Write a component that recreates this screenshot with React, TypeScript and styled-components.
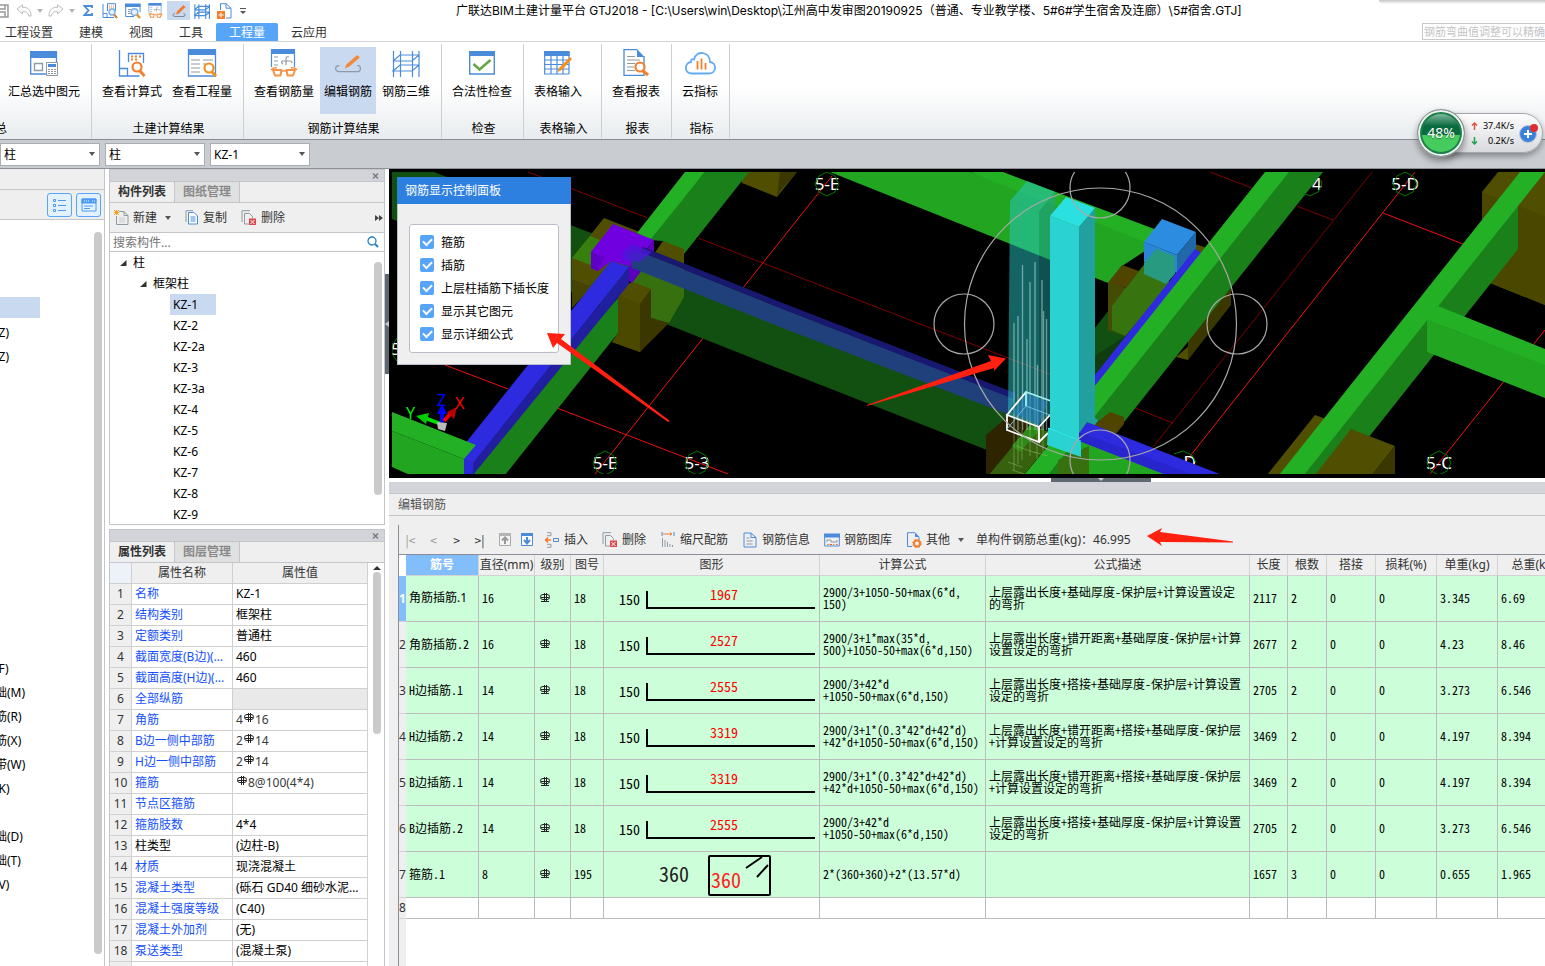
import React from 'react';
import styled, { createGlobalStyle, css } from 'styled-components';

const uiFont = `"Noto Sans", "Noto Sans CJK SC", sans-serif`;
const titleFont = `Inter, "Noto Sans CJK SC", sans-serif`;
const gridFont = `"Noto Sans CJK SC", "Liberation Mono", monospace`;

const GlobalStyle = createGlobalStyle`
  * { box-sizing: border-box; }
  body { margin: 0; background: #fff; font: 12px/16px ${uiFont}; color: #000; overflow: hidden; }
  button, input, select { font: inherit; color: inherit; }
  button { border: 0; background: none; padding: 0; white-space: nowrap; cursor: pointer; }
  ul { list-style: none; margin: 0; padding: 0; }
  svg { display: block; flex: none; }
`;

/* ---------- shell ---------- */

const Shell = styled.div`
  position: relative;
  display: flex;
  flex-direction: column;
  height: 100vh;
  overflow: hidden;
`;

const TitleBar = styled.header`
  display: grid;
  grid-template-columns: 456px 1fr;
  height: 22px;
  flex: none;
`;

const QuickBar = styled.div`
  display: flex;
  align-items: center;
  height: 20px;
  margin-left: -9px;
`;

const QuickButton = styled.button<{ $active?: boolean; $width?: number }>`
  display: flex;
  align-items: center;
  justify-content: center;
  width: ${p => p.$width ?? 23}px;
  height: 19px;
  margin-top: 1px;
  background: ${p => (p.$active ? '#c9d9f0' : 'none')};
`;

const WindowTitle = styled.h1`
  margin: 0;
  font: 12px/22px ${titleFont};
  white-space: nowrap;
`;

const TopShade = styled.div`
  position: absolute;
  top: 0;
  right: 0;
  width: 166px;
  height: 4px;
  background: linear-gradient(#c4c4c4, #fff);
  border-bottom-left-radius: 4px;
`;

const TabBar = styled.nav`
  display: flex;
  justify-content: space-between;
  height: 20px;
  flex: none;
  border-bottom: 1px solid #d4d4d4;
`;

const Tabs = styled.div`
  display: flex;
  margin-left: -8px;
  padding-top: 1px;
`;

const RibbonTab = styled.button<{ $active?: boolean }>`
  padding: 1px 13px 0;
  height: 18px;
  line-height: 17px;
  border-radius: 2px 2px 0 0;
  color: ${p => (p.$active ? '#fff' : '#333')};
  background: ${p => (p.$active ? '#57a5f8' : 'none')};
`;

const HelpSearch = styled.input`
  width: 123px;
  height: 17px;
  margin-top: 1px;
  padding: 0 0 0 1px;
  border: 1px solid #c9c9c9;
  border-right: 0;
  font-size: 11px;
  background: #fff;
  &::placeholder { color: #c4c4c4; opacity: 1; }
`;

const Ribbon = styled.div`
  display: flex;
  height: 98px;
  flex: none;
  padding: 2px 0 1px;
  border-bottom: 1px solid #878c94;
  background: linear-gradient(#fff 45%, #e8ecee);
`;

const RibbonGroup = styled.section<{ $width?: number; $pull?: number }>`
  display: flex;
  flex-direction: column;
  justify-content: space-between;
  flex: none;
  min-width: ${p => p.$width ?? 0}px;
  margin-left: ${p => -(p.$pull ?? 0)}px;
  border-right: 1px solid #ccced1;
  padding: 3px 7px 0 6px;
`;

const RibbonButtons = styled.div<{ $end?: boolean }>`
  display: flex;
  gap: 2px;
  justify-content: ${p => (p.$end ? 'flex-end' : 'flex-start')};
`;

const RibbonButton = styled.button<{ $active?: boolean }>`
  display: flex;
  flex-direction: column;
  align-items: center;
  gap: 6px;
  height: 67px;
  padding: 2px 4px 0;
  line-height: 18px;
  background: ${p => (p.$active ? '#c9d9f0' : 'none')};
`;

const GroupLabel = styled.div`
  padding-left: 3px;
  text-align: center;
  line-height: 18px;
`;

const ComboBar = styled.div`
  display: flex;
  align-items: center;
  gap: 5px;
  height: 29px;
  flex: none;
  border-bottom: 1px solid #8d9198;
  background: #c9ccd1;
`;

const ComboBox = styled.label`
  display: grid;
  grid-template-columns: 1fr 10px;
  align-items: center;
  width: 100px;
  height: 23px;
  border: 1px solid #aaadb1;
  background: #fff;
  select {
    grid-area: 1 / 1 / 2 / 3;
    width: 100%;
    height: 21px;
    padding: 1px 3px 0;
    border: 0;
    background: none;
    appearance: none;
  }
  svg { grid-area: 1 / 2; pointer-events: none; }
`;

/* ---------- speed widget ---------- */

const SpeedWidget = styled.aside`
  position: absolute;
  top: 109px;
  right: 2px;
  display: flex;
  align-items: center;
  width: 126px;
  height: 48px;
`;

const SpeedPill = styled.div`
  display: flex;
  align-items: center;
  justify-content: flex-end;
  gap: 5px;
  width: 98px;
  height: 40px;
  margin-left: auto;
  padding-right: 3px;
  border: 1px solid #a5a8ad;
  border-radius: 0 20px 20px 0;
  background: linear-gradient(#fdfdfd, #d9dade);
  box-shadow: 0 3px 6px rgba(0, 0, 0, 0.35);
`;

const SpeedBall = styled.div`
  position: absolute;
  left: 0;
  display: grid;
  place-items: center;
  width: 48px;
  height: 48px;
  border-radius: 50%;
  border: 1px solid #8d9096;
  box-shadow: inset 0 0 0 2px #f2f2f2, inset 0 0 0 4px #1d8048, 0 4px 7px rgba(0, 0, 0, 0.4);
  background: linear-gradient(#7fb89a 4px, #0a6b40 16px, #0a6b40 25px, #46cc5e 25px);
  color: #fff;
  font-size: 14px;
  text-shadow: 0 1px 1px rgba(0, 60, 20, 0.5);
`;

const SpeedLines = styled.div`
  display: grid;
  grid-template-columns: 8px 35px;
  row-gap: 3px;
  align-items: center;
  font-size: 9px;
  line-height: 12px;
  span { text-align: right; }
`;

/* ---------- work area ---------- */

const Work = styled.main`
  display: flex;
  flex: 1;
  min-height: 0;
`;

const NavPanel = styled.aside`
  position: relative;
  width: 105px;
  flex: none;
  border-right: 1px solid #c3c5ca;
  overflow: hidden;
`;

const NavHead = styled.div`
  height: 21px;
  background: #efefef;
  border-bottom: 1px solid #c3c5ca;
`;

const NavTools = styled.div`
  display: flex;
  align-items: center;
  justify-content: flex-end;
  gap: 4px;
  height: 30px;
  padding-right: 3px;
  background: #efefef;
  border-bottom: 1px solid #c3c5ca;
`;

const NavToggle = styled.button`
  display: grid;
  place-items: center;
  width: 25px;
  height: 24px;
  border: 1px solid #57a5f8;
  border-radius: 3px;
  background: #e4f1ff;
`;

const NavList = styled.ul`
  margin: 2px 0 0 -5px;
  li { height: 24px; line-height: 24px; white-space: nowrap; }
`;

const NavSelected = styled.span`
  display: block;
  width: 45px;
  height: 21px;
  margin-top: 3px;
  background: #c9d9f0;
`;

const Thumb = styled.div<{ $top: number; $right: number; $height?: number; $bottom?: number }>`
  position: absolute;
  top: ${p => p.$top}px;
  right: ${p => p.$right}px;
  width: 8px;
  ${p => (p.$height ? css`height: ${p.$height}px;` : css`bottom: ${p.$bottom ?? 0}px;`)}
  border-radius: 4px;
  background: #cacaca;
`;

const SideColumn = styled.div`
  display: flex;
  flex-direction: column;
  gap: 4px;
  width: 276px;
  margin-left: 4px;
  flex: none;
`;

const Dock = styled.section<{ $height?: number }>`
  display: flex;
  flex-direction: column;
  min-height: 0;
  flex: ${p => (p.$height ? `0 0 ${p.$height}px` : '1')};
  border: 1px solid #c3c5ca;
  border-bottom-width: ${p => (p.$height ? 1 : 0)}px;
  overflow: hidden;
`;

const DockStrip = styled.div`
  display: flex;
  align-items: center;
  justify-content: flex-end;
  height: 12px;
  flex: none;
  padding-right: 4px;
  background: #d3d4d9;
  border-bottom: 1px solid #c3c5ca;
`;

const DockTabs = styled.div`
  display: flex;
  height: 21px;
  flex: none;
  background: #efefef;
  border-bottom: 1px solid #c3c5ca;
`;

const DockTab = styled.button<{ $active?: boolean }>`
  width: 65px;
  border-right: 1px solid #c3c5ca;
  font-weight: 700;
  line-height: 20px;
  color: ${p => (p.$active ? '#333' : '#8a8a8a')};
  background: ${p => (p.$active ? '#efefef' : '#e0e0e0')};
`;

const DockTools = styled.div`
  display: flex;
  align-items: center;
  gap: 14px;
  height: 30px;
  flex: none;
  padding: 0 1px 0 4px;
  background: #efefef;
  border-bottom: 1px solid #c3c5ca;
`;

const ToolButton = styled.button`
  display: flex;
  align-items: center;
  gap: 4px;
  color: #333;
  line-height: 18px;
`;

const PushRight = styled.button`
  margin-left: auto;
`;

const SearchRow = styled.label`
  display: flex;
  align-items: center;
  height: 19px;
  flex: none;
  padding-right: 5px;
  border-bottom: 1px solid #c3c5ca;
  input {
    flex: 1;
    min-width: 0;
    height: 18px;
    padding: 0 3px;
    border: 0;
    background: none;
  }
  input::placeholder { color: #757575; opacity: 1; }
`;

const Tree = styled.ul`
  position: relative;
  flex: 1;
  min-height: 0;
  overflow: hidden;
`;

const TreeRow = styled.li<{ $level: number }>`
  display: flex;
  align-items: center;
  gap: 6px;
  height: 21px;
  padding-left: ${p => [10, 30, 60][p.$level]}px;
`;

const TreeName = styled.span<{ $active?: boolean; $leaf?: boolean }>`
  line-height: 21px;
  padding: ${p => (p.$leaf ? '0 18px 0 3px' : '0')};
  background: ${p => (p.$active ? '#c9d9f0' : 'none')};
`;

const PropScroll = styled.div`
  position: relative;
  flex: 1;
  min-height: 0;
  overflow: hidden;
`;

const PropTable = styled.table`
  width: 258px;
  table-layout: fixed;
  border-collapse: separate;
  border-spacing: 0;
  td, th {
    height: 21px;
    padding: 0 3px;
    border-right: 1px solid #d0d0d0;
    border-bottom: 1px solid #d0d0d0;
    font-weight: 400;
    line-height: 20px;
    white-space: nowrap;
    overflow: hidden;
    text-overflow: ellipsis;
    text-align: left;
  }
  thead th { background: #efefef; text-align: center; color: #333; }
  thead th:first-child { background: #edf2f9; }
  tbody th { background: #efefef; text-align: center; color: #333; padding: 0; }
`;

const PropName = styled.td<{ $plain?: boolean }>`
  color: ${p => (p.$plain ? '#000' : '#1450ff')};
`;

const PropValue = styled.td<{ $blank?: boolean; $soft?: boolean }>`
  background: ${p => (p.$blank ? '#e9e9e9' : '#fff')};
  color: ${p => (p.$soft ? '#3a3a3a' : '#000')};
  svg { display: inline-block; margin: 0 1px; vertical-align: 1px; }
`;

const ScrollUp = styled.svg`
  position: absolute;
  top: 3px;
  right: 3px;
`;

const Splitter = styled.div`
  display: flex;
  flex-direction: column;
  width: 4px;
  flex: none;
  padding-top: 105px;
`;

const SplitterGrip = styled.button<{ $flat?: boolean }>`
  display: grid;
  place-items: center;
  width: ${p => (p.$flat ? 100 : 4)}px;
  height: ${p => (p.$flat ? 4 : 100)}px;
  background: #606972;
`;

const Center = styled.div`
  display: flex;
  flex-direction: column;
  flex: 1;
  min-width: 0;
`;

const Viewport = styled.section`
  position: relative;
  height: 309px;
  flex: none;
  background: #000;
`;

const SceneSvg = styled.svg`
  width: 100%;
  height: 309px;
`;

const ArrowLayer = styled.svg`
  position: absolute;
  inset: 0;
  width: 100%;
  height: 309px;
  pointer-events: none;
`;

const FlatSplitter = styled.div`
  display: flex;
  height: 4px;
  flex: none;
  padding-left: 662px;
`;

/* ---------- rebar display dialog ---------- */

const Dialog = styled.section`
  position: absolute;
  top: 8px;
  left: 8px;
  width: 174px;
  background: #efefef;
  border: 1px solid #b9bdcc;
  border-top: 0;
`;

const DialogTitle = styled.h2`
  margin: 0 -1px;
  padding: 0 8px;
  background: #2e80e0;
  color: #fff;
  font: 12px/27px ${uiFont};
`;

const CheckBoxes = styled.fieldset`
  margin: 20px 11px 11px;
  padding: 6px 0 6px 10px;
  border: 1px solid #babcca;
  border-radius: 3px;
  background: #fff;
  label {
    display: flex;
    align-items: center;
    gap: 7px;
    height: 23px;
    white-space: nowrap;
  }
`;

const Check = styled.input`
  appearance: none;
  display: grid;
  place-items: center;
  width: 14px;
  height: 14px;
  margin: 0 0 1px;
  border-radius: 2px;
  background: #57a5f8;
  &::after {
    content: '';
    width: 7px;
    height: 4px;
    margin-top: -2px;
    border: solid #fff;
    border-width: 0 0 2px 2px;
    transform: rotate(-45deg);
  }
`;

/* ---------- rebar editor ---------- */

const Editor = styled.section`
  display: flex;
  flex-direction: column;
  flex: 1;
  min-height: 0;
  background: #efefef;
`;

const EditorStrip = styled.div`
  height: 12px;
  flex: none;
  background: #d3d4d9;
  border-bottom: 1px solid #c3c5ca;
`;

const EditorTitle = styled.h2`
  margin: 0;
  height: 22px;
  flex: none;
  padding-left: 9px;
  border-bottom: 1px solid #c3c5ca;
  color: #555;
  font: 12px/21px ${uiFont};
`;

const EditorBody = styled.div`
  display: flex;
  flex-direction: column;
  flex: 1;
  min-height: 0;
  margin: 9px 0 0 9px;
  border-left: 1px solid #8b8d98;
`;

const EditorTools = styled.div`
  display: flex;
  align-items: center;
  height: 30px;
  flex: none;
  border-bottom: 1px solid #8b8d98;
  color: #333;
  white-space: nowrap;
`;

const NavCluster = styled.div`
  display: flex;
  margin-right: 6px;
  button { width: 23px; font-family: ${gridFont}; }
  button:disabled { color: #999; }
`;

const IconPair = styled.div`
  display: flex;
  gap: 6px;
  margin-right: 9px;
`;

const ToolGroup = styled.div`
  display: flex;
  gap: 14px;
`;

const Total = styled.output`
  margin: 0 14px 0 12px;
`;

const GridArea = styled.div`
  flex: 1;
  min-height: 0;
  overflow: hidden;
  background: linear-gradient(90deg, #efefef 7px, #fff 7px);
`;

const RebarTable = styled.table`
  width: 1172px;
  table-layout: fixed;
  border-collapse: separate;
  border-spacing: 0;
  th, td {
    padding: 0 3px;
    border-right: 1px solid #bcbcbc;
    border-bottom: 1px solid #bcbcbc;
    text-align: left;
    font-weight: 400;
  }
  thead th {
    height: 21px;
    padding: 0;
    text-align: center;
    line-height: 20px;
    color: #333;
    border-color: #d3d3d3;
    background: #efefef;
    white-space: nowrap;
  }
  thead th:first-child { background: #fff; border: 0; }
  tbody th { padding: 0; background: #efefef; color: #333; border-color: #d3d3d3; border-right: 0; }
  td {
    padding: 0 2px 2px 3px;
    font: 12px/12px ${gridFont};
    font-feature-settings: 'hwid';
    white-space: nowrap;
  }
`;

const ColumnHead = styled.th<{ $active?: boolean }>`
  && {
    ${p => p.$active && css`background: #82bdfc; color: #fff; font-weight: 700;`}
  }
`;

const RebarRow = styled.tr<{ $empty?: boolean; $active?: boolean }>`
  height: ${p => (p.$empty ? 21 : 46)}px;
  td { background: ${p => (p.$empty ? '#fff' : '#ccffd9')}; }
  td:nth-child(2) { ${p => p.$active && css`font-family: ${uiFont}; font-feature-settings: normal;`} }
  && th { ${p => p.$active && css`background: #82bdfc; color: #fff; font-weight: 700;`} }
`;

const GradeCell = styled.td`
  && { padding-left: 5px; }
`;

const ShapeCell = styled.td`
  && { padding: 0; }
  text { font-family: ${gridFont}; }
`;

/* ---------- icons ---------- */

const B = '#4a8bdb';
const O = '#f27f2c';
const G = '#8f9aa3';

const Caret = ({ color = '#555' }: { color?: string }) => (
  <svg width="6" height="4"><path d="M0 0h6L3 4z" fill={color} /></svg>
);

const Close = () => (
  <svg width="8" height="8" stroke="#777" strokeWidth="1.400"><path d="M1 1.500l5 5M6 1.500l-5 5" /></svg>
);

const Rebar = ({ foot }: { foot?: boolean }) => (
  <svg width="10" height="10" viewBox="0 0 10 10" fill="none" stroke="#222" strokeWidth="1" role="img" aria-label="HRB400">
    <path d="M.5 3.500Q.5 1.500 3 1.500h4q2.500 0 2.500 2v1q0 2-2.500 2H3Q.5 6.500 .5 4.500zM4.500 0v9M6.500 0v9M1 4.500h8" />
    {foot && <path d="M1 8.500h8" />}
  </svg>
);

const Undo = ({ flip }: { flip?: boolean }) => (
  <svg width="16" height="13" viewBox="0 0 16 13" fill="none" stroke="#b9bcc0" strokeLinejoin="round">
    <path d={flip ? 'M15 5L9.500 .8v2.500C4 3 1 6 1 12h2.500c.5-3.500 2.500-4.500 6-4.500V10z' : 'M1 5L6.500 .8v2.500C12 3 15 6 15 12h-2.500c-.5-3.500-2.500-4.500-6-4.500V10z'} />
  </svg>
);

const FormulaIcon = ({ s = 28 }: { s?: number }) => (
  <svg width={s} height={s} viewBox="0 0 28 28" fill="none">
    <path d="M1.500 1v26h20M1.500 19.500h8V27M10.500 13V4.500h15V14" stroke={B} strokeWidth="1.300" />
    <path d="M13 7.500h2M17 7.500h2M21 7.500h2M13 10.500h2M17 10.500h2" stroke={O} strokeWidth="2" />
    <circle cx="19" cy="18" r="4.500" stroke={O} strokeWidth="2.200" fill="#fff" /><path d="M22 22l4.500 5" stroke={O} strokeWidth="3" />
  </svg>
);

const QuickFormulaIcon = () => (
  <svg width="16" height="16" viewBox="0 0 16 16" fill="none">
    <path d="M1 1v13.500h11M1 10.500h4v4M5.500 8V.7h8V8" stroke={B} />
    <path d="M7 3h5M7 5h5" stroke={O} strokeDasharray="1 1" />
    <circle cx="10" cy="9" r="3" stroke="#7ab0e8" strokeWidth="1.400" fill="#e4f1ff" /><path d="M12 11.500l3 3.500" stroke="#c9824a" strokeWidth="2" />
  </svg>
);

const QuantityIcon = () => (
  <svg width="30" height="28" viewBox="0 0 30 28" fill="none">
    <path d="M1.500 0v27h27V0" stroke={B} strokeWidth="1.300" /><path d="M1 0h28v6H1z" fill={B} />
    <path d="M4 11h9M4 15h9M4 19h9M4 23h9M16 11h10M16 15h3" stroke={G} strokeWidth="1.200" />
    <circle cx="22" cy="19" r="4.500" stroke="#f2921d" strokeWidth="2.200" fill="#fff" /><path d="M25 23l4 4" stroke="#f2921d" strokeWidth="3" />
  </svg>
);

const QuickQuantityIcon = () => (
  <svg width="16" height="16" viewBox="0 0 16 16" fill="none">
    <path d="M.7 1v12.500H9M15 1v8" stroke={B} /><path d="M0 .5h15.500v3.500H0z" fill={B} />
    <path d="M3 6.500h3M3 8.500h2M3 10.500h3" stroke={G} />
    <circle cx="9.500" cy="9" r="3.300" stroke="#7ab0e8" strokeWidth="1.400" fill="#e4f1ff" /><path d="M12 11.500l3 3.500" stroke="#f2921d" strokeWidth="2.400" />
  </svg>
);

const GlassesIcon = ({ s = 28 }: { s?: number }) => (
  <svg width={s} height={s} viewBox="0 0 28 28" fill="none">
    <path d="M1.500 0v18M24.500 0v18" stroke={B} strokeWidth="1.200" /><path d="M1 0h24v5H1z" fill={B} />
    <path d="M4 8h4M4 12h4M4 16h4M12 12h8q2 0 2 2M12 12q-1 2 1 3M16 16V10q0-3 3-2" stroke={G} strokeWidth="1.200" />
    <path d="M1 21q2-3 6-2M27 21q-2-3-6-2M12 22h4" stroke="#f59349" strokeWidth="1.600" />
    <path d="M3 21h8.500l-1 5.500h-5.500zM16.500 21H25l-2 5.500h-5.500z" stroke="#f59349" strokeWidth="2" strokeLinejoin="round" />
  </svg>
);

const EditIcon = ({ s = 26 }: { s?: number }) => (
  <svg width={s} height={s} viewBox="0 0 26 26" fill="none">
    <path d="M5 15.500Q1.500 15.500 1.500 18t3.500 3h16q3.500 0 3.500-3t-3-2.500" stroke={G} strokeWidth="1.200" />
    <path d="M21.500 5.500l2.500 2.500L14 16.500l-4 1.500L11.500 14.500z" fill="#f5893a" />
  </svg>
);

const QuickEditIcon = () => (
  <svg width="14" height="14" viewBox="0 0 14 14" fill="none">
    <path d="M3 9.500Q1 9.500 1 11t2 1.500h8q2 0 2-1.500t-1.500-1.500" stroke="#7f8a93" /><path d="M11.500 1l2 2-6.500 6.500-3 1 1-3z" fill="#f5792a" />
  </svg>
);

const LatticeIcon = ({ s = 28 }: { s?: number }) => (
  <svg width={s} height={s} viewBox="0 0 28 28" fill="none" stroke={B} strokeWidth={s < 20 ? 2 : 1.2}>
    <path d="M1.500 2v26M8.500 2v26M20.500 2v26M27 2v26M1 12l7-6h19M1 12h19l7-6M1 22l7-6h19M1 22h19l7-6M0 22h20" />
  </svg>
);

const SummaryIcon = () => (
  <svg width="28" height="28" viewBox="0 0 28 28" fill="none">
    <path d="M.7 3v22h17M26.500 3v10" stroke={B} strokeWidth="1.300" /><path d="M0 2h27v7H0z" fill={B} />
    <path d="M4.500 14.500h8v7h-8z" stroke={G} strokeWidth="1.400" />
    <path d="M16.500 13.500h11v13h-11z" stroke={G} fill="#fff" /><path d="M18 15h8v3h-8z" fill={B} />
    <path d="M18 20.500h8M18 22.500h8M18 24.500h8" stroke={G} strokeDasharray="2 1" />
  </svg>
);

const ValidIcon = () => (
  <svg width="26" height="28" viewBox="0 0 26 28" fill="none">
    <path d="M.7 3h24.600v22H.7z" stroke={B} strokeWidth="1.400" /><path d="M0 2h26v5H0z" fill={B} />
    <path d="M4.500 15l6 5.500L21.500 11" stroke="#67a744" strokeWidth="2.600" />
  </svg>
);

const SheetIcon = () => (
  <svg width="28" height="28" viewBox="0 0 28 28" fill="none">
    <path d="M.7 3v22H25M25 3v22M1 11h24M1 15.500h24M1 20h24M7 7v18M13 7v18M19 7v18" stroke={B} strokeWidth="1.200" />
    <path d="M0 2h25.600v5H0z" fill={B} /><path d="M26 8l2 2-10 11-4.500 2 1.500-4z" fill="#f2921d" />
  </svg>
);

const ReportIcon = () => (
  <svg width="26" height="28" viewBox="0 0 26 28" fill="none">
    <path d="M14 .7H1v25.600h20V7" stroke={B} strokeWidth="1.300" /><path d="M14 0l7.500 8H14z" fill={B} />
    <path d="M4 7.500h8M4 11h13M4 14.500h8M4 18h7M4 21.500h8" stroke={G} strokeWidth="1.200" />
    <circle cx="17" cy="18" r="4.500" stroke={O} strokeWidth="2.200" fill="#fff" /><path d="M20 22l5 4" stroke={O} strokeWidth="3" />
  </svg>
);

const CloudIcon = () => (
  <svg width="32" height="28" viewBox="0 0 32 28" fill="none">
    <path d="M8 24.500h16.500c8.500 0 8.500-11 1.500-11.500C26 2 12 1 10 10.500 C8 9.500 6.500 11 7 13c-7 1-7 11.500 1 11.500z" stroke="#63aaf5" strokeWidth="1.800" />
    <path d="M13.500 12v8.500M17.500 9.500v11M21.500 14v6.500" stroke={O} strokeWidth="1.800" />
  </svg>
);

const DocPlusIcon = () => (
  <svg width="16" height="16" viewBox="0 0 16 16" fill="none">
    <path d="M3.500 7V.7H9l5 4.500V15H9M9 .7v4.500h5" stroke={B} /><path d="M0 8h8v8H0z" fill={O} /><path d="M4 9.500v5M1.500 12h5" stroke="#fff" />
  </svg>
);

const NewIcon = () => (
  <svg width="15" height="15" viewBox="0 0 15 15" fill="none">
    <path d="M5 1.500h5l4 4v9H2.500V6M10 1.500v4h4" stroke={G} /><path d="M5 8h6M5 10h6M5 12h6" stroke="#ccc" />
    <path d="M0 0l5 5M5 0L0 5M2.500 0v5M0 2.500h5" stroke="#f2a01d" />
  </svg>
);

const CopyIcon = () => (
  <svg width="14" height="15" viewBox="0 0 14 15" fill="none">
    <path d="M1 12V.7h7" stroke={G} /><path d="M3.500 2.500h5.500l3.500 3.500v8h-9z" stroke={B} fill="#fff" />
    <path d="M5.500 7h5M5.500 9h5M5.500 11h5" stroke={B} />
  </svg>
);

const DeleteIcon = () => (
  <svg width="16" height="16" viewBox="0 0 16 16" fill="none">
    <path d="M1 12V.7h8M8 14H3.500V3.500h5l3 3V8" stroke={G} /><path d="M8 8.500h7V15H8z" fill="#d9484a" />
    <path d="M9.500 10l4 4M13.500 10l-4 4" stroke="#fff" />
  </svg>
);

const InsertIcon = () => (
  <svg width="16" height="16" viewBox="0 0 16 16" fill="none">
    <path d="M3 .7h4v3H3M3 15.300h4v-3H3" stroke={G} /><path d="M1 8h6M4 5.500L1.500 8 4 10.500" stroke={O} strokeWidth="1.500" />
    <path d="M9.500 6.500h5v3h-5z" stroke={B} />
  </svg>
);

const ScaleIcon = () => (
  <svg width="16" height="16" viewBox="0 0 16 16" fill="none">
    <path d="M2 0v4M14 0v4" stroke={B} /><path d="M3 2h9M10 .5L12 2l-2 1.500" stroke={O} />
    <path d="M2.500 6v9M5 8v7M7.500 10v5M10 12v3M12.500 13v2" stroke={G} />
  </svg>
);

const InfoIcon = () => (
  <svg width="16" height="16" viewBox="0 0 16 16" fill="none">
    <path d="M2 1h7l5 4.500V15H2zM9 1v4.500h5" stroke={B} /><path d="M4.500 6h3M4.500 9h6M4.500 12h6" stroke={G} />
  </svg>
);

const GalleryIcon = () => (
  <svg width="16" height="16" viewBox="0 0 16 16" fill="none">
    <path d="M.7 2v12h14.600V2" stroke={B} /><path d="M0 1.500h16v4H0z" fill={B} />
    <path d="M3 10V8h4v2h6V8" stroke={G} /><path d="M3 12.500h2.500M9 12.500h1.500" stroke="#e5a52c" /><path d="M6 12.500h2M12 12.500h1.500" stroke="#e55" />
  </svg>
);

const OtherIcon = () => (
  <svg width="16" height="16" viewBox="0 0 16 16" fill="none">
    <path d="M6 14.500H1.500V.7H9L13 5v3" stroke={B} /><path d="M9 .7V5h4z" fill={B} />
    <circle cx="11" cy="11.500" r="3" stroke={O} strokeWidth="2" /><circle cx="11" cy="11.500" r="4.300" stroke={O} strokeDasharray="1.700 1.700" />
  </svg>
);

const MoveIcon = ({ down }: { down?: boolean }) => (
  <svg width="16" height="16" viewBox="0 0 16 16" fill="none">
    <path d="M2.500 1.500h11v12h-11z" stroke={down ? B : '#aaa'} fill={down ? '#fff' : '#f4f4f4'} />
    <path d="M2 1h12v3H2z" fill={down ? B : '#b5b5b5'} />
    <path d={down ? 'M8 5v6M5 8l3 3.500L11 8' : 'M8 12V6M5 8.500l3-3 3 3'} stroke={down ? B : '#999'} strokeWidth="2" />
  </svg>
);

/* ---------- 3D scene ---------- */

const P = ({ p, f, o }: { p: string; f: string; o?: number }) => <polygon points={p} fill={f} opacity={o} />;

const top = '#24b024';
const front = '#22a622';
const side = '#1a801a';
const dim = '#125012';
const olive = '#504e00';
const oliveDark = '#3a3800';
const blue = '#2d2ae0';
const blueDark = '#211fa0';

const AxisLabel = ({ x, y, t }: { x: number; y: number; t: string }) => (
  <g>
    <text x={x} y={y + 6} textAnchor="middle" fontSize="17" fill="#fff">{t}</text>
    <path d={`M${x} ${y - 12}l8 4 4 8-4 8-8 4-8-4-4-8 4-8z`} fill="none" stroke="#007800" />
  </g>
);

const rods = [
  [1014, 323], [1018, 316], [1022.5, 265], [1027, 339], [1030, 282],
  [1035, 262], [1037.5, 365], [1042, 280], [1043.5, 311], [1046.5, 319],
];

const Scene = () => (
  <SceneSvg viewBox="389 169 1156 309" preserveAspectRatio="xMinYMin slice" role="img" aria-label="三维视图">
    <clipPath id="view"><rect x="392" y="172" width="2000" height="302" /></clipPath>
    <g clipPath="url(#view)">
      {/* axis grid lines */}
      <g stroke="#a00000" fill="none">
        <path d="M528 172L648 218M698 238L1052 375M1210 172l42 16M1297 206l36 14M1135 408l38 15M1372 172L1153 447" strokeWidth=".8" />
        <path d="M445 365l63 24M557 408L728 474M832 176L595 474M1415 172L1187 460M1383 213l80 31M1545 330L1430 474" stroke="#f01010" />
      </g>

      {/* far beam on the left */}
      <P f={dim} p="392,172 434,172 640,252 610,308 392,219" />
      <P f={olive} p="604,218 645,234 610,285 572,258" />
      <P f="#37800f" p="590,236 600,240 591,252 591,268 572,258" />
      <P f={olive} p="572,258 604,270 572,308" />
      <P f="#454300" p="572,279 592,287 572,308" />
      <P f={olive} p="741,172 780,172 797,172 777,197 742,183" />
      <P f={oliveDark} p="797,172 780,191 777,197 780,172" />

      {/* diagonal beam 5-E */}
      <P f={top} p="685,172 705,172 652,240 637,233" />
      <P f={side} p="705,172 749,172 684,254 663,241 650,240" />
      <P f={olive} p="663,241 684,249 684,297 640,352 612,342 618,333 618,290 632,282 651,258" />
      <P f="#37700f" p="651,254 684,266 684,297 651,320 651,290 632,282" />
      <P f={dim} p="651,272 780,320 1012,412 987,450 780,369 651,318" />
      <P f="#37700f" p="651,270 684,283 684,297 669,323 651,318" />
      <P f={olive} p="632,282 651,289 640,304 618,295" />
      <P f="#4b4900" p="618,295 640,304 640,352 612,342 618,333" />
      <P f={oliveDark} p="640,304 651,289 651,318 669,323 640,352" />

      {/* near blue beam */}
      <P f={side} p="473,463 618,298 618,333 505,475 472,475" />
      <P f={blue} p="611,261 629,267 473,464 464,459 464,445" />
      <P f={blueDark} p="629,267 629,284 473,475 473,463" />
      <P f="#2b28d8" p="464,458 473,463 473,475 464,475" />
      <P f={top} p="392,412 476,445 464,459 392,431" />
      <P f={front} p="392,431 464,459 464,475 410,475 392,467" />

      {/* purple column head */}
      <P f="#7000e0" p="613,224 654,240 632,267 611,261 598,271 591,268 591,252" />
      <P f="#6000c4" p="591,252 605,257 598,271 591,268" />
      <P f="#5c00bc" p="654,240 654,255 632,283 629,281 629,267 640,258" />

      {/* long translucent blue beam */}
      <P f="#181870" p="643,247 780,302 1015,393 1015,400 780,308 640,252" />
      <P f="#20407c" p="630,252 645,254 780,308 1014,399 1010,415 780,327 632,268" />
      <P f="#4a18d8" p="632,244 652,252 640,262 623,260 623,252" o={0.8} />

      {/* beam behind the columns */}
      <P f={front} p="830,172 970,172 1145,230 1145,251 1122,266 1108,283" />
      <P f={top} p="970,172 1003,172 1157,230 1145,242" />

      {/* block right of the columns */}
      <P f={dim} p="1095,328 1160,244 1170,285 1095,377" />
      <P f="#103c10" p="1095,356 1125,336 1136,330 1095,377" />
      <P f="#504400" p="1122,265 1139,271 1126,288 1108,283" />
      <P f="#454a05" p="1108,282 1132,290 1125,336 1108,330" />
      <P f="#37740f" p="1139,271 1157,249 1170,284 1125,336 1112,330 1112,306" />
      <P f="#504e00" p="1195,244 1207,248 1200,256 1192,254" />
      <P f="#2c8ce0" p="1162,219 1196,232 1177,255 1144,242" />
      <P f="#2a85d8" p="1144,242 1177,255 1177,273 1144,262" />
      <P f="#2068a8" p="1177,255 1196,232 1196,249 1177,273" />
      <P f="#279a80" p="1156,249 1175,256 1175,274 1166,284 1144,274 1144,263" />
      <P f={blue} p="1195,249 1202,253 1095,390 1095,375" />

      {/* diagonal beam 5-D */}
      <P f={olive} p="1190,345 1231,288 1188,360 1176,357" />
      <P f={oliveDark} p="1231,286 1231,305 1188,360 1188,340" />
      <P f={top} p="1265,172 1290,172 1049,475 1024,475" />
      <P f={side} p="1289,172 1323,172 1082,475 1048,475" />

      {/* blocks under the selected column */}
      <P f="#2e2400" p="986,435 1012,413 1040,425 1048,446 1024,475 986,475" />
      <P f="#36620f" p="989,475 1030,425 1050,432 1050,442 1024,475" />
      <P f="#2d8a18" p="1012,446 1030,425 1040,430 1020,452" />
      <P f="#504400" p="1095,424 1110,412 1124,417 1124,424 1114,436 1095,432" />
      <P f={front} p="1078,442 1100,442 1168,475 1070,475" />
      <P f="#38700f" p="1058,460 1089,446 1089,475 1058,475" />

      <text x="1187" y="468" textAnchor="middle" fontSize="17" fill="#fff">-D</text>
      <path d="M1174 454l9-3 9 4 4 8" fill="none" stroke="#007800" />
      <P f={blue} p="1087,422 1222,475 1190,475 1079,433" />
      <P f="#2825cc" p="1079,432 1194,475 1166,475 1079,441" />

      {/* selected column, translucent */}
      <P f="#28c8c8" o={0.5} p="1010,201 1027,181 1055,192 1039,212" />
      <P f="#28c8c8" o={0.5} p="1010,201 1039,212 1039,428 1008,415" />
      <P f="#1ea0a0" o={0.5} p="1039,212 1055,192 1055,410 1039,428" />
      <g stroke="#bfeaea" strokeWidth="1.400" opacity=".5">
        {rods.map(([x, y]) => <path key={x} d={`M${x} ${y}V430`} />)}
      </g>
      <g stroke="#8fc060" opacity=".5" fill="none">
        <path d="M1014 430v40M1018 430v34M1022 430v30M1030 428v28M1037 425v34M1043 425v28M1008 462l14 5M1012 470l12 4M1016 446l20 7M1034 452l14 4" />
      </g>
      <P f="#2a80c0" o={0.6} p="1012,413 1026,393 1048,402 1039,425" />
      <g fill="none" stroke="#fff" strokeWidth="1.800">
        <path d="M1007 415l32 12v15l-32-12zM1039 427l11-12M1039 442l9-9M1007 415l19-23" />
        <path d="M1026 406v-14l25 9" stroke="#a0f0f0" />
        <path d="M1007 429l19-23 24 9" stroke="#6fc0e0" strokeWidth="1" />
      </g>

      {/* opaque column */}
      <P f="#2be0e0" p="1066,197 1095,208 1079,227 1050,216" />
      <P f="#2ad2d2" p="1050,216 1079,227 1079,441 1081,442 1081,457 1047,445 1048,428 1050,428" />
      <P f="#22a0a0" p="1079,227 1095,208 1095,418 1098,420 1095,425 1087,422 1079,433" />
      <path d="M1048 428l33 13" stroke="#2be8e8" fill="none" />

      {/* diagonal beam 5-C with its branch */}
      <P f={olive} p="1498,172 1545,172 1545,305 1490,283 1482,220 1482,192" />
      <P f="#4a4800" p="1482,192 1545,216 1545,305 1490,283 1482,220" />
      <P f={olive} p="1315,415 1326,419 1280,475 1267,475" />
      <P f={side} p="1545,172 1518,205 1518,249 1330,486 1303,475 1543,172" />
      <P f={olive} p="1351,429 1395,446 1372,475 1315,475" />
      <P f={oliveDark} p="1395,446 1395,475 1372,475" />
      <P f={top} p="1520,172 1545,172 1304,475 1279,475" />
      <P f={top} p="1438,306 1545,349 1545,366 1427,320" />
      <P f={front} p="1427,320 1545,365 1545,398 1427,352" />

      {/* orbit control */}
      <g fill="none" stroke="#a8a8a8" strokeWidth="1.200">
        <circle cx="1100.500" cy="324" r="136" />
        <circle cx="964" cy="324" r="30" /><circle cx="1237" cy="324" r="30" />
        <circle cx="1100" cy="188" r="30" /><circle cx="1100" cy="460" r="30" />
      </g>

      <AxisLabel x={827} y={184} t="5-E" />
      <AxisLabel x={605} y={463} t="5-E" />
      <AxisLabel x={697} y={463} t="5-3" />
      <AxisLabel x={1405} y={184} t="5-D" />
      <AxisLabel x={1439} y={463} t="5-C" />
      <text x="1312" y="190" fontSize="17" fill="#fff">4</text>
      <path d="M1321 180l1 4-4 8-8 4-7-3" fill="none" stroke="#007800" />
      <text x="391" y="355" fontSize="17" fill="#fff">5</text>
      <path d="M397 338l-5 8v8l5 7" fill="none" stroke="#007800" />

      {/* coordinate triad */}
      <g strokeWidth="4">
        <path d="M441 424l-16-6" stroke="#0d0" /><path d="M416 416l13-3-3 11z" fill="#0c0" />
        <path d="M442 424v-12" stroke="#00f" /><path d="M442 404l5 10h-10z" fill="#00f" />
        <path d="M444 421l7-8" stroke="#e00" /><path d="M457 407l-3 12-7-7z" fill="#b00" />
      </g>
      <P f="#bbb" p="437,422 447,423 445,431 438,429" />
      <text x="406" y="419" fontSize="16" fill="#0e0">Y</text>
      <text x="437" y="406" fontSize="16" fill="#00f">Z</text>
      <text x="455" y="409" fontSize="16" fill="#f00">X</text>
    </g>
  </SceneSvg>
);

/* ---------- data ---------- */

const navRows = ['', '', '', '*', '(Z)', '(Z)', '', '', '', '', '', '', '', '', '', '', '', '', '(F)', '础(M)', '筋(R)', '筋(X)', '带(W)', '(K)', '', '础(D)', '础(T)', '(V)'];

const members = ['KZ-1', 'KZ-2', 'KZ-2a', 'KZ-3', 'KZ-3a', 'KZ-4', 'KZ-5', 'KZ-6', 'KZ-7', 'KZ-8', 'KZ-9'];

const props: [string, React.ReactNode][] = [
  ['名称', 'KZ-1'], ['结构类别', '框架柱'], ['定额类别', '普通柱'], ['截面宽度(B边)(mm)', '460'], ['截面高度(H边)(mm)', '460'],
  ['全部纵筋', null], ['角筋', <>4<Rebar />16</>], ['B边一侧中部筋', <>2<Rebar />14</>], ['H边一侧中部筋', <>2<Rebar />14</>],
  ['箍筋', <><Rebar />8@100(4*4)</>], ['节点区箍筋', ''], ['箍筋肢数', '4*4'], ['柱类型', '(边柱-B)'], ['材质', '现浇混凝土'],
  ['混凝土类型', '(砾石 GD40 细砂水泥混凝土)'], ['混凝土强度等级', '(C40)'], ['混凝土外加剂', '(无)'], ['泵送类型', '(混凝土泵)'], ['', ''],
];

const heads = ['筋号', '直径(mm)', '级别', '图号', '图形', '计算公式', '公式描述', '长度', '根数', '搭接', '损耗(%)', '单重(kg)', '总重(kg)'];
const widths = [7, 73, 56, 36, 33, 216, 166, 264, 38, 39, 49, 61, 61, 73];

type Bar = { name: string; d: string; no: string; shape: string; calc: string[]; desc: string[]; len: string; n: string; w: string; total: string };

const bars: Bar[] = [
  { name: '角筋插筋.1', d: '16', no: '18', shape: '1967', calc: ['2900/3+1050-50+max(6*d,', '150)'], desc: ['上层露出长度+基础厚度-保护层+计算设置设定', '的弯折'], len: '2117', n: '2', w: '3.345', total: '6.69' },
  { name: '角筋插筋.2', d: '16', no: '18', shape: '2527', calc: ['2900/3+1*max(35*d,', '500)+1050-50+max(6*d,150)'], desc: ['上层露出长度+错开距离+基础厚度-保护层+计算', '设置设定的弯折'], len: '2677', n: '2', w: '4.23', total: '8.46' },
  { name: 'H边插筋.1', d: '14', no: '18', shape: '2555', calc: ['2900/3+42*d', '+1050-50+max(6*d,150)'], desc: ['上层露出长度+搭接+基础厚度-保护层+计算设置', '设定的弯折'], len: '2705', n: '2', w: '3.273', total: '6.546' },
  { name: 'H边插筋.2', d: '14', no: '18', shape: '3319', calc: ['2900/3+1*(0.3*42*d+42*d)', '+42*d+1050-50+max(6*d,150)'], desc: ['上层露出长度+错开距离+搭接+基础厚度-保护层', '+计算设置设定的弯折'], len: '3469', n: '2', w: '4.197', total: '8.394' },
  { name: 'B边插筋.1', d: '14', no: '18', shape: '3319', calc: ['2900/3+1*(0.3*42*d+42*d)', '+42*d+1050-50+max(6*d,150)'], desc: ['上层露出长度+错开距离+搭接+基础厚度-保护层', '+计算设置设定的弯折'], len: '3469', n: '2', w: '4.197', total: '8.394' },
  { name: 'B边插筋.2', d: '14', no: '18', shape: '2555', calc: ['2900/3+42*d', '+1050-50+max(6*d,150)'], desc: ['上层露出长度+搭接+基础厚度-保护层+计算设置', '设定的弯折'], len: '2705', n: '2', w: '3.273', total: '6.546' },
  { name: '箍筋.1', d: '8', no: '195', shape: '', calc: ['2*(360+360)+2*(13.57*d)'], desc: [], len: '1657', n: '3', w: '0.655', total: '1.965' },
];

const BarShape = ({ value }: { value: string }) => (
  <svg width="215" height="45" viewBox="0 0 215 45" fill="none" stroke="#000" strokeWidth="2">
    {value ? (
      <>
        <path d="M43 15v17h168" />
        <g stroke="none" fontSize="14">
          <text x="15" y="29" fill="#000">150</text>
          <text x="120" y="24" fill="#f00" textAnchor="middle">{value}</text>
        </g>
      </>
    ) : (
      <>
        <rect x="105" y="4" width="61" height="39" rx="1" />
        <path d="M142 16l16-11M153 25l11-12" />
        <g stroke="none" fontSize="20">
          <text x="55" y="30" fill="#222">360</text>
          <text x="107" y="36" fill="#f22">360</text>
        </g>
      </>
    )}
  </svg>
);

const Lines = ({ text }: { text: string[] }) => <>{text.map(t => <div key={t}>{t}</div>)}</>;

/* ---------- composed parts ---------- */

const Combo = ({ label, value }: { label: string; value: string }) => (
  <ComboBox>
    <select aria-label={label} defaultValue={value}><option>{value}</option></select>
    <Caret />
  </ComboBox>
);

const Group = ({ label, children, width, pull }: { label: string; children: React.ReactNode; width?: number; pull?: number }) => (
  <RibbonGroup $width={width} $pull={pull}>
    <RibbonButtons $end={!!pull}>{children}</RibbonButtons>
    <GroupLabel>{label}</GroupLabel>
  </RibbonGroup>
);

const Header = () => (
  <>
    <TitleBar>
      <QuickBar>
        <QuickButton aria-label="保存" $width={22}>
          <svg width="14" height="14" fill="none" stroke="#999" strokeWidth="1.500"><path d="M1 1h12v12H1zM4 1v4h6V1M4 13V8h6v5" /></svg>
        </QuickButton>
        <QuickButton aria-label="撤销" $width={22}><Undo /></QuickButton>
        <QuickButton aria-label="撤销列表" $width={10}><Caret color="#b5b5b5" /></QuickButton>
        <QuickButton aria-label="恢复" $width={22}><Undo flip /></QuickButton>
        <QuickButton aria-label="恢复列表" $width={10}><Caret color="#b5b5b5" /></QuickButton>
        <QuickButton aria-label="汇总计算" $width={21}>
          <svg width="10" height="11" fill="none" stroke={B} strokeWidth="1.800"><path d="M9 3V1H1.500L5.500 5.500 1.500 10H9V8" /></svg>
        </QuickButton>
        <QuickButton aria-label="查看计算式"><QuickFormulaIcon /></QuickButton>
        <QuickButton aria-label="查看工程量"><QuickQuantityIcon /></QuickButton>
        <QuickButton aria-label="查看钢筋量"><GlassesIcon s={15} /></QuickButton>
        <QuickButton aria-label="编辑钢筋" $active><QuickEditIcon /></QuickButton>
        <QuickButton aria-label="钢筋三维"><LatticeIcon s={16} /></QuickButton>
        <QuickButton aria-label="新建"><DocPlusIcon /></QuickButton>
        <QuickButton aria-label="更多" $width={14}>
          <svg width="6" height="8"><path d="M0 1h6v1H0zM0 4h6L3 7z" fill="#555" /></svg>
        </QuickButton>
      </QuickBar>
      <WindowTitle>广联达BIM土建计量平台 GTJ2018 - [C:\Users\win\Desktop\江州高中发审图20190925（普通、专业教学楼、5#6#学生宿舍及连廊）\5#宿舍.GTJ]</WindowTitle>
    </TitleBar>
    <TopShade />
    <TabBar>
      <Tabs>
        {['工程设置', '建模', '视图', '工具', '工程量', '云应用'].map(t => (
          <RibbonTab key={t} $active={t === '工程量'}>{t}</RibbonTab>
        ))}
      </Tabs>
      <HelpSearch aria-label="帮助搜索" placeholder="钢筋弯曲值调整可以精确" />
    </TabBar>
    <Ribbon>
      <Group label="汇总" width={195} pull={103}>
        <RibbonButton><SummaryIcon />汇总选中图元</RibbonButton>
      </Group>
      <Group label="土建计算结果">
        <RibbonButton><FormulaIcon />查看计算式</RibbonButton>
        <RibbonButton><QuantityIcon />查看工程量</RibbonButton>
      </Group>
      <Group label="钢筋计算结果">
        <RibbonButton><GlassesIcon />查看钢筋量</RibbonButton>
        <RibbonButton $active><EditIcon s={28} />编辑钢筋</RibbonButton>
        <RibbonButton><LatticeIcon />钢筋三维</RibbonButton>
      </Group>
      <Group label="检查"><RibbonButton><ValidIcon />合法性检查</RibbonButton></Group>
      <Group label="表格输入" width={78}><RibbonButton><SheetIcon />表格输入</RibbonButton></Group>
      <Group label="报表"><RibbonButton><ReportIcon />查看报表</RibbonButton></Group>
      <Group label="指标"><RibbonButton><CloudIcon />云指标</RibbonButton></Group>
    </Ribbon>
    <ComboBar>
      <Combo label="构件大类" value="柱" />
      <Combo label="构件类型" value="柱" />
      <Combo label="构件名称" value="KZ-1" />
    </ComboBar>
  </>
);

const Speed = () => (
  <SpeedWidget>
    <SpeedPill>
      <SpeedLines>
        <svg width="7" height="8" fill="none" stroke="#e05540" strokeWidth="1.500"><path d="M3.500 8V1M1 3.500L3.500 1 6 3.500" /></svg>
        <span>37.4K/s</span>
        <svg width="7" height="8" fill="none" stroke="#23a050" strokeWidth="1.500"><path d="M3.500 0v7M1 4.500L3.500 7 6 4.500" /></svg>
        <span>0.2K/s</span>
      </SpeedLines>
      <svg width="20" height="20">
        <circle cx="9" cy="11" r="8.500" fill="#3a80dc" stroke="#c5c8d0" />
        <path d="M9 7v8M5 11h8" stroke="#fff" strokeWidth="2" />
        <circle cx="15" cy="5" r="4" fill="#dc3030" />
      </svg>
    </SpeedPill>
    <SpeedBall>48%</SpeedBall>
  </SpeedWidget>
);

const Navigator = () => (
  <NavPanel>
    <NavHead />
    <NavTools>
      <NavToggle aria-label="列表视图">
        <svg width="13" height="14" fill="none" stroke="#4a9af5"><path d="M.5 1.500h2v2h-2zM.5 6.500h2v2h-2zM.5 11.500h2v2h-2zM5 2.500h8M5 7.500h8M5 12.500h8" /></svg>
      </NavToggle>
      <NavToggle aria-label="面板视图">
        <svg width="16" height="14" fill="none" stroke="#4a9af5"><path d="M1 1h14v12H1z" /><path d="M1 1h14v4H1z" fill="#4a9af5" /><path d="M3 8h9M3 10.500h6" /><path d="M3 3h5M11 3h3" stroke="#fff" strokeDasharray="1 1" /></svg>
      </NavToggle>
    </NavTools>
    <NavList>
      {navRows.map((t, i) => <li key={i}>{t === '*' ? <NavSelected /> : t}</li>)}
    </NavList>
    <Thumb $top={63} $right={2} $bottom={12} />
  </NavPanel>
);

const TreeArrow = () => <svg width="7" height="6"><path d="M6.500 0v6H0z" fill="#333" /></svg>;

const Members = () => (
  <Dock $height={356}>
    <DockStrip><Close /></DockStrip>
    <DockTabs><DockTab $active>构件列表</DockTab><DockTab>图纸管理</DockTab></DockTabs>
    <DockTools>
      <ToolButton><NewIcon />新建<span /><Caret /></ToolButton>
      <ToolButton><CopyIcon />复制</ToolButton>
      <ToolButton><DeleteIcon />删除</ToolButton>
      <PushRight aria-label="更多工具"><svg width="8" height="6"><path d="M0 0l4 3-4 3zM4 0l4 3-4 3z" fill="#444" /></svg></PushRight>
    </DockTools>
    <SearchRow>
      <input aria-label="搜索构件" placeholder="搜索构件..." />
      <svg width="12" height="12" fill="none" stroke="#2580c8" strokeWidth="1.300"><circle cx="5" cy="5" r="4" /><path d="M8 8l3 3" strokeWidth="2" /></svg>
    </SearchRow>
    <Tree>
      <TreeRow $level={0}><TreeArrow /><TreeName>柱</TreeName></TreeRow>
      <TreeRow $level={1}><TreeArrow /><TreeName>框架柱</TreeName></TreeRow>
      {members.map(m => <TreeRow key={m} $level={2}><TreeName $leaf $active={m === 'KZ-1'}>{m}</TreeName></TreeRow>)}
      <Thumb $top={10} $right={2} $height={233} />
    </Tree>
  </Dock>
);

const Properties = () => (
  <Dock>
    <DockStrip><Close /></DockStrip>
    <DockTabs><DockTab $active>属性列表</DockTab><DockTab>图层管理</DockTab></DockTabs>
    <PropScroll>
      <PropTable>
        <colgroup><col width="22" /><col width="101" /><col width="135" /></colgroup>
        <thead><tr><th /><th>属性名称</th><th>属性值</th></tr></thead>
        <tbody>
          {props.map(([name, value], i) => (
            <tr key={i}>
              <th>{name && i + 1}</th>
              <PropName $plain={name === '柱类型'}>{name}</PropName>
              <PropValue $blank={value === null} $soft={i >= 6 && i <= 9}>{value}</PropValue>
            </tr>
          ))}
        </tbody>
      </PropTable>
      <ScrollUp width="8" height="4"><path d="M4 0l4 4H0z" fill="#333" /></ScrollUp>
      <Thumb $top={9} $right={3} $height={162} />
    </PropScroll>
  </Dock>
);

const DisplayDialog = () => (
  <Dialog>
    <DialogTitle>钢筋显示控制面板</DialogTitle>
    <CheckBoxes>
      {['箍筋', '插筋', '上层柱插筋下插长度', '显示其它图元', '显示详细公式'].map(t => (
        <label key={t}><Check type="checkbox" defaultChecked />{t}</label>
      ))}
    </CheckBoxes>
  </Dialog>
);

const RebarEditor = () => (
  <Editor>
    <EditorStrip />
    <EditorTitle>编辑钢筋</EditorTitle>
    <EditorBody>
      <EditorTools>
        <NavCluster>
          <button disabled>|&lt;</button><button disabled>&lt;</button><button>&gt;</button><button>&gt;|</button>
        </NavCluster>
        <IconPair>
          <button aria-label="上移"><MoveIcon /></button>
          <button aria-label="下移"><MoveIcon down /></button>
        </IconPair>
        <ToolGroup>
          <ToolButton><InsertIcon />插入</ToolButton>
          <ToolButton><DeleteIcon />删除</ToolButton>
          <ToolButton><ScaleIcon />缩尺配筋</ToolButton>
          <ToolButton><InfoIcon />钢筋信息</ToolButton>
          <ToolButton><GalleryIcon />钢筋图库</ToolButton>
          <ToolButton><OtherIcon />其他<span /><Caret /></ToolButton>
        </ToolGroup>
        <Total>单构件钢筋总重(kg)：46.995</Total>
        <svg width="88" height="24" viewBox="0 0 88 24"><path d="M2 8L17 0l-2 4 73 9.500v1L15 14l2 4z" fill="#ff2010" /></svg>
      </EditorTools>
      <GridArea>
        <RebarTable>
          <colgroup>{widths.map((w, i) => <col key={i} width={w} />)}</colgroup>
          <thead><tr><th />{heads.map(h => <ColumnHead key={h} $active={h === '筋号'}>{h}</ColumnHead>)}</tr></thead>
          <tbody>
            {bars.map((b, i) => (
              <RebarRow key={b.name} $active={i === 0}>
                <th>{i + 1}</th>
                <td>{b.name}</td><td>{b.d}</td><GradeCell><Rebar foot /></GradeCell><td>{b.no}</td>
                <ShapeCell><BarShape value={b.shape} /></ShapeCell>
                <td><Lines text={b.calc} /></td><td><Lines text={b.desc} /></td>
                <td>{b.len}</td><td>{b.n}</td><td>0</td><td>0</td><td>{b.w}</td><td>{b.total}</td>
              </RebarRow>
            ))}
            <RebarRow $empty><th>8</th>{heads.map(h => <td key={h} />)}</RebarRow>
          </tbody>
        </RebarTable>
      </GridArea>
    </EditorBody>
  </Editor>
);

export default function App() {
  return (
    <Shell>
      <GlobalStyle />
      <Header />
      <Work>
        <Navigator />
        <SideColumn><Members /><Properties /></SideColumn>
        <Splitter>
          <SplitterGrip aria-label="收起"><svg width="4" height="6"><path d="M4 0v6L0 3z" fill="#c5c9cf" /></svg></SplitterGrip>
        </Splitter>
        <Center>
          <Viewport>
            <Scene />
            <DisplayDialog />
            <ArrowLayer viewBox="389 169 1156 309" preserveAspectRatio="xMinYMin slice" fill="#ff2010">
              <path d="M547 333l18 1-4 5 109 82-2 1-111-79-4 5z" />
              <path d="M1006 358.500L988 355l3 6-124 44v1l127-38v3z" />
            </ArrowLayer>
          </Viewport>
          <FlatSplitter>
            <SplitterGrip $flat aria-label="收起"><svg width="6" height="4"><path d="M0 0h6L3 3z" fill="#c5c9cf" /></svg></SplitterGrip>
          </FlatSplitter>
          <RebarEditor />
        </Center>
      </Work>
      <Speed />
    </Shell>
  );
}
